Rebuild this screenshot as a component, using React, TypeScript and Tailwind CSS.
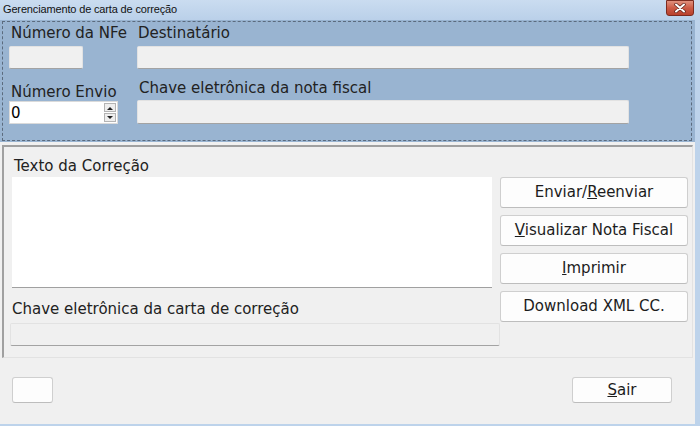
import React from "react";

const labelCls = "text-[15px] leading-[18px] text-[#222]";
const fieldCls =
  "h-[23px] bg-[#f0f0f0] border border-[#e2e2e2] border-b-[#a3a3a3] rounded-[2px]";
const btnCls =
  "flex items-center justify-center bg-[#fdfdfd] border border-[#cfcfcf] border-b-[#bdbdbd] rounded-[3px] text-[15px] text-[#1c1c1c]";

function CloseButton() {
  return (
    <div className="w-[28px] h-[16px] mr-[6px] rounded-b-[3px] border border-[#7d2b1f] bg-gradient-to-b from-[#e0907d] via-[#cc5a45] to-[#b8402c] flex items-center justify-center">
      <svg width="12" height="10" viewBox="0 0 12 10">
        <path
          d="M2 1.5 L10 8.5 M10 1.5 L2 8.5"
          stroke="#5a2018"
          strokeWidth="3.4"
          strokeLinecap="round"
        />
        <path
          d="M2 1.5 L10 8.5 M10 1.5 L2 8.5"
          stroke="#ffffff"
          strokeWidth="2"
          strokeLinecap="round"
        />
      </svg>
    </div>
  );
}

function SpinBox() {
  return (
    <div className="w-[109px] h-[23px] bg-white border border-[#dadada] flex items-center relative">
      <span className="text-[15px] leading-[18px] text-black ml-[1px]">0</span>
      <div className="absolute right-[1px] top-[1px] flex flex-col gap-[1px]">
        <div className="w-[12px] h-[9px] bg-[#eeeeee] border border-[#b4b4b4] flex items-center justify-center">
          <svg width="6" height="4" viewBox="0 0 6 4">
            <path d="M0 4 L3 1 L6 4 Z" fill="#222" />
          </svg>
        </div>
        <div className="w-[12px] h-[9px] bg-[#eeeeee] border border-[#b4b4b4] flex items-center justify-center">
          <svg width="6" height="4" viewBox="0 0 6 4">
            <path d="M0 0 L3 3 L6 0 Z" fill="#222" />
          </svg>
        </div>
      </div>
    </div>
  );
}

export default function App() {
  return (
    <div
      className="w-[700px] h-[426px] bg-[#bdd3eb] flex flex-col overflow-hidden"
      style={{ fontFamily: '"DejaVu Sans", Verdana, sans-serif' }}
    >
      {/* Title bar */}
      <div className="h-[20px] shrink-0 flex items-start justify-between bg-gradient-to-b from-[#cadcf0] to-[#bad0e9]">
        <span
          className="text-[11px] leading-[14px] mt-[2px] ml-[3px] tracking-[-0.15px] text-[#111]"
          style={{ fontFamily: '"Liberation Sans", Arial, sans-serif' }}
        >
          Gerenciamento de carta de correção
        </span>
        <CloseButton />
      </div>

      <div className="flex-1 flex pr-[5px] pb-[2px]">
        <div className="flex-1 bg-[#f0f0f0] flex flex-col">
          {/* Top panel */}
          <div className="h-[122px] shrink-0 bg-[#99b4d1] pt-[1px] pl-[2px] pr-[3px] pb-[1px]">
            <div className="h-full border border-dashed border-[#5b6b7e] pl-[6px] pt-[2px] flex">
              <div className="w-[128px] flex flex-col">
                <span className={`${labelCls} ml-[2px]`}>Número da NFe</span>
                <div className={`${fieldCls} w-[74px] mt-[4px]`} />
                <span className={`${labelCls} ml-[2px] mt-[14px]`}>Número Envio</span>
                <SpinBox />
              </div>
              <div className="w-[492px] flex flex-col">
                <span className={`${labelCls} ml-[1px]`}>Destinatário</span>
                <div className={`${fieldCls} w-[492px] mt-[4px]`} />
                <span className={`${labelCls} ml-[2px] mt-[10px]`}>
                  Chave eletrônica da nota fiscal
                </span>
                <div className={`${fieldCls} w-[492px] h-[24px] mt-[3px]`} />
              </div>
            </div>
          </div>

          {/* Correction panel */}
          <div className="h-[213px] shrink-0 mt-[3px] ml-[2px] mr-[2px] border-t-2 border-l-2 border-r border-b border-t-[#a0a0a0] border-l-[#a0a0a0] border-r-[#e2e2e2] border-b-[#e2e2e2] pt-[10px] flex flex-col">
            <span className={`${labelCls} ml-[10px]`}>Texto da Correção</span>
            <div className="flex mt-[2px]">
              <div className="w-[490px] ml-[6px] flex flex-col">
                <div className="w-[480px] h-[111px] ml-[2px] bg-white border-b border-[#a0a0a0]" />
                <span className={`${labelCls} ml-[2px] mt-[12px]`}>
                  Chave eletrônica da carta de correção
                </span>
                <div className={`${fieldCls} w-[490px] mt-[5px]`} />
              </div>
              <div className="w-[188px] flex flex-col gap-[7px]">
                <div className={`${btnCls} h-[31px]`}>
                  <span>
                    Enviar/<u>R</u>eenviar
                  </span>
                </div>
                <div className={`${btnCls} h-[31px]`}>
                  <span>
                    <u>V</u>isualizar Nota Fiscal
                  </span>
                </div>
                <div className={`${btnCls} h-[31px]`}>
                  <span>
                    <u>I</u>mprimir
                  </span>
                </div>
                <div className={`${btnCls} h-[31px]`}>
                  <span>Download XML CC.</span>
                </div>
              </div>
            </div>
          </div>

          {/* Footer buttons */}
          <div className="flex-1 flex items-start justify-between pt-[19px] pl-[12px] pr-[23px]">
            <div className={`${btnCls} w-[41px] h-[26px]`} />
            <div className={`${btnCls} w-[100px] h-[26px]`}>
              <span>
                <u>S</u>air
              </span>
            </div>
          </div>
        </div>
      </div>
    </div>
  );
}
